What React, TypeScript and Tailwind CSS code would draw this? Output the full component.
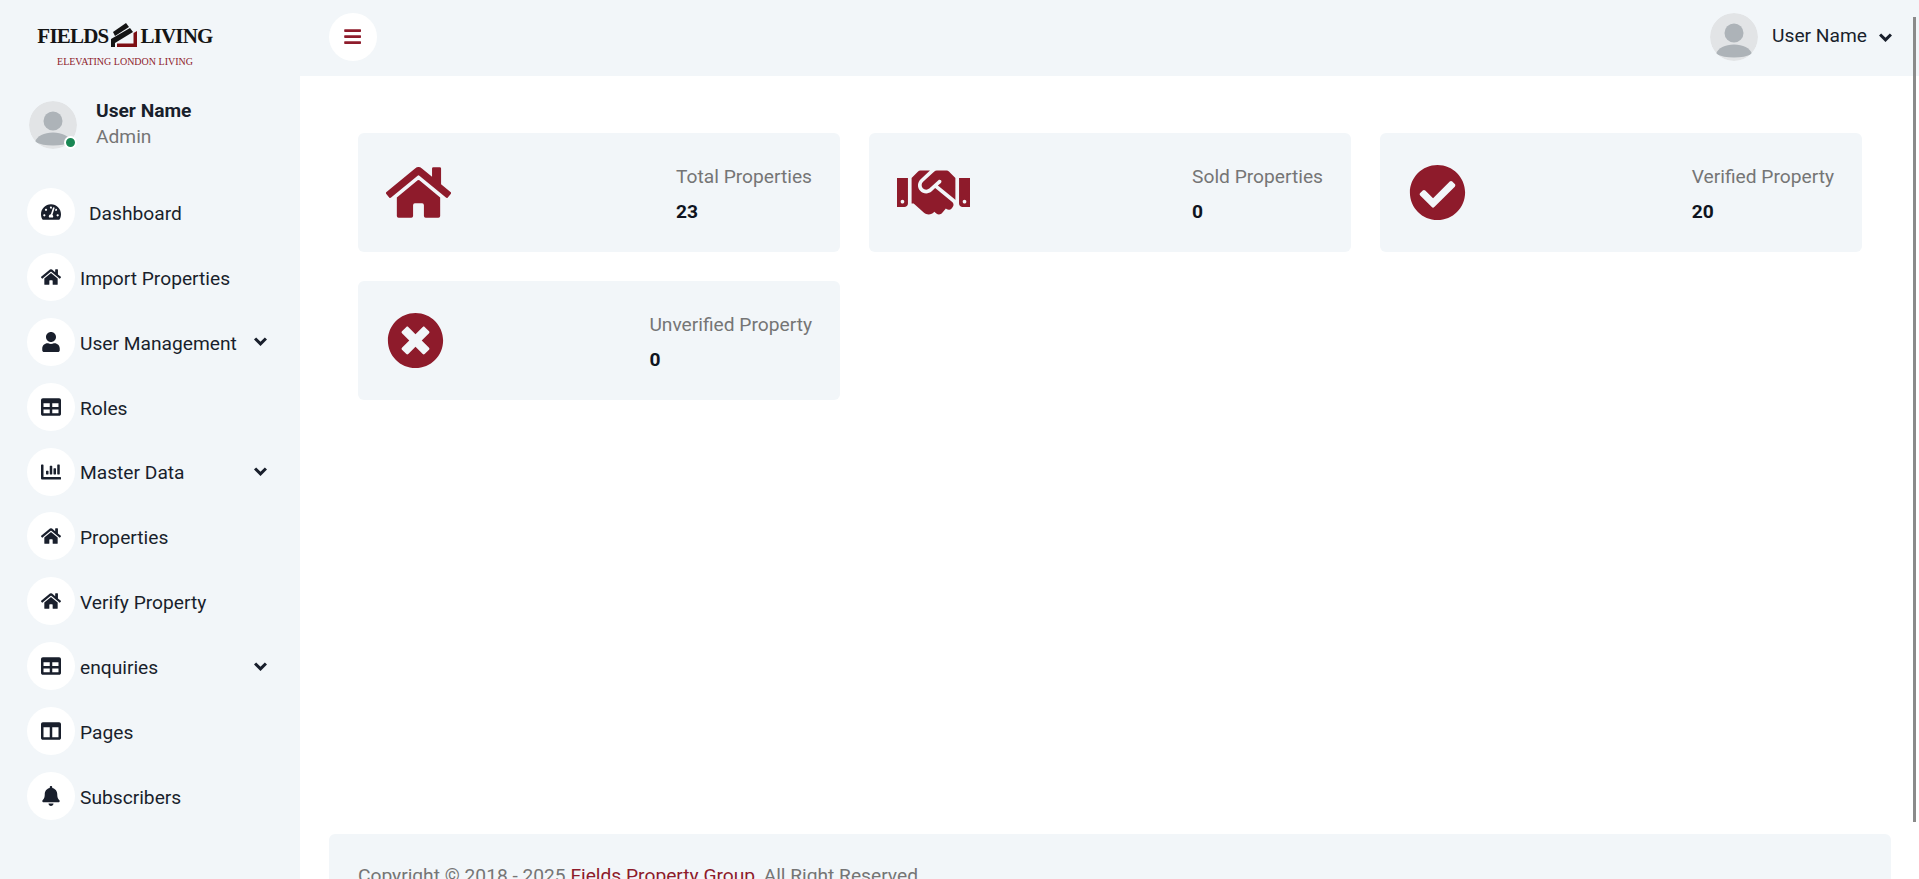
import { ReactNode } from 'react';
import {
  FaBars,
  FaBell,
  FaChartBar,
  FaCheckCircle,
  FaColumns,
  FaHandshake,
  FaHome,
  FaTable,
  FaTachometerAlt,
  FaTimesCircle,
  FaUser,
} from 'react-icons/fa';

const navItems = [
  { label: 'Import Properties', icon: <FaHome /> },
  { label: 'User Management', icon: <FaUser />, caret: true },
  { label: 'Roles', icon: <FaTable /> },
  { label: 'Master Data', icon: <FaChartBar />, caret: true },
  { label: 'Properties', icon: <FaHome /> },
  { label: 'Verify Property', icon: <FaHome /> },
  { label: 'enquiries', icon: <FaTable />, caret: true },
  { label: 'Pages', icon: <FaColumns /> },
  { label: 'Subscribers', icon: <FaBell /> },
];

function Avatar() {
  return (
    <svg viewBox="0 0 48 48" className="w-12 h-12 rounded-full shrink-0">
      <circle cx="24" cy="24" r="24" fill="#e2e4e6" />
      <circle cx="24" cy="20" r="9.5" fill="#adb3b8" />
      <path d="M6 41c2-6 9-9.500 18-9.500s16 3.500 18 9.500c-5 2.500-11 3.500-18 3.500s-13-1-18-3.500z" fill="#adb3b8" />
    </svg>
  );
}

function Caret({ className }: { className: string }) {
  return (
    <svg viewBox="0 0 12 8" className={className} fill="none" stroke="#191f2c" strokeWidth="2.8">
      <path d="M1 1.200l5 5 5-5" />
    </svg>
  );
}

function Logo() {
  return (
    <div className="flex flex-col items-center font-['Liberation_Serif',serif] w-[174px]">
      <div className="flex items-center text-[#141414] font-bold text-[21px] leading-[26px] tracking-[-0.8px]">
        <span>FIELDS</span>
        <svg viewBox="0 0 26 26" className="w-[26px] h-[26px] -mt-[1px] mx-[3px]">
          <path d="M2 10 L15 1 L18 5 L4 14z" fill="#141414" />
          <path d="M0 17 L19 6 L22 10 L4 21 V25 H0z" fill="#141414" />
          <path d="M6 25 H26 V9 L22.500 11 V21.500 H6z" fill="#7d0f14" />
        </svg>
        <span>LIVING</span>
      </div>
      <div className="text-[#8e1b2b] text-[10px] leading-[12px] mt-[7px]">ELEVATING LONDON LIVING</div>
    </div>
  );
}

function IconCircle({ children }: { children: ReactNode }) {
  return (
    <span className="w-12 h-12 rounded-full bg-white flex items-center justify-center text-[20px] text-[#191f2c] shrink-0">
      {children}
    </span>
  );
}

function StatCard({ icon, label, value }: { icon: ReactNode; label: string; value: string }) {
  return (
    <div className="bg-[#f2f6f9] rounded-[6px] h-[119px] flex items-center justify-between pl-7 pr-7">
      <div className="text-[#8e1b2b]">{icon}</div>
      <div className="pt-[3px]">
        <p className="text-[19.2px] leading-[28px] text-[#757575]">{label}</p>
        <p className="text-[19.2px] leading-[28px] font-bold text-[#0f1420] mt-[7px]">{value}</p>
      </div>
    </div>
  );
}

export default function App() {
  return (
    <div className="h-[879px] overflow-hidden flex bg-white font-['Roboto',sans-serif] relative">
      {/* Sidebar */}
      <aside className="w-[300px] shrink-0 bg-[#f2f6f9] pl-[27px]">
        <div className="h-[76px] flex items-center pl-[11px] pt-[14px]">
          <Logo />
        </div>
        <div className="flex items-center gap-[19px] mt-[24px] pl-[2px]">
          <div className="relative">
            <Avatar />
            <span className="absolute right-0 bottom-0 w-[13px] h-[13px] rounded-full bg-[#198754] border-2 border-white" />
          </div>
          <div className="-mt-[2px]">
            <p className="text-[19.2px] leading-[26px] font-bold text-[#191f2c]">User Name</p>
            <p className="text-[19.2px] leading-[26px] text-[#757575]">Admin</p>
          </div>
        </div>
        <nav className="mt-[38px] flex flex-col gap-[16.9px]">
          <div className="flex items-center h-12 text-[19.2px] text-[#191f2c]">
            <IconCircle>
              <FaTachometerAlt />
            </IconCircle>
            <span className="ml-[14px] pt-[3px] leading-none">Dashboard</span>
          </div>
          {navItems.map((item) => (
            <div key={item.label} className="flex items-center h-12 text-[19.2px] text-[#191f2c]">
              <IconCircle>{item.icon}</IconCircle>
              <span className="ml-[5px] pt-[3px] leading-none">{item.label}</span>
              {item.caret && <Caret className="absolute left-[254px] w-[13px] h-[9px]" />}
            </div>
          ))}
        </nav>
      </aside>

      {/* Main */}
      <div className="flex-1 flex flex-col min-w-0">
        <header className="h-[76px] bg-[#f2f6f9] flex items-center justify-between pl-[29px] pr-[27px] pb-[2px] shrink-0">
          <span className="w-12 h-12 rounded-full bg-white flex items-center justify-center text-[#8e1b2b] text-[19.2px]">
            <FaBars />
          </span>
          <div className="flex items-center text-[#191f2c]">
            <Avatar />
            <span className="text-[19.2px] ml-[14px] -mt-[2px]">User Name</span>
            <Caret className="w-[13px] h-[9px] ml-[12px]" />
          </div>
        </header>
        <main className="flex-1 pt-[57px] pl-[58px] pr-[57px]">
          <div className="grid grid-cols-3 gap-[29px]">
            <StatCard icon={<FaHome className="text-[65px]" />} label="Total Properties" value="23" />
            <StatCard icon={<FaHandshake className="text-[73px]" />} label="Sold Properties" value="0" />
            <StatCard icon={<FaCheckCircle className="text-[57px] ml-px" />} label="Verified Property" value="20" />
            <StatCard icon={<FaTimesCircle className="text-[57px] ml-px" />} label="Unverified Property" value="0" />
          </div>
        </main>
        <footer className="ml-[29px] mr-[28px] bg-[#f2f6f9] rounded-t-[6px] h-[45px] pt-[28px] pl-[29px] text-[19.2px] leading-[28px] text-[#757575] whitespace-nowrap shrink-0">
          Copyright © 2018 - 2025 <span className="text-[#8e1b2b]">Fields Property Group</span>, All Right Reserved
        </footer>
      </div>

      {/* Scrollbar thumb */}
      <div className="absolute right-[3px] top-[17px] h-[805px] w-[3px] bg-[#8a8a8a]" />
    </div>
  );
}
